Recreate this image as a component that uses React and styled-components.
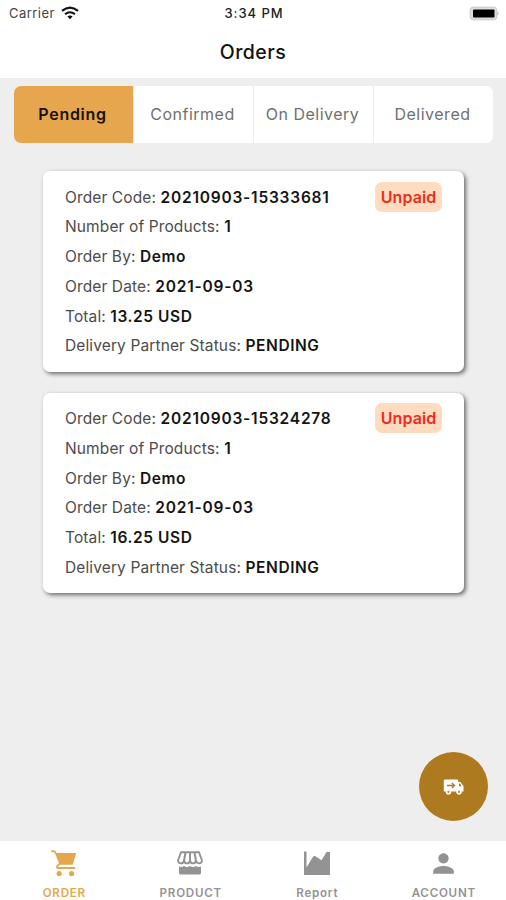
import React from 'react'
import styled, { createGlobalStyle } from 'styled-components'
import { MdPerson } from 'react-icons/md'

const GlobalStyle = createGlobalStyle`
  * {
    box-sizing: border-box;
  }
  body {
    margin: 0;
    background: #eee;
    font-family: Inter, 'Liberation Sans', sans-serif;
  }
`
const Screen = styled.div`
  display: flex;
  flex-direction: column;
  width: 506px;
  height: 900px;
  overflow: hidden;
  position: relative;
  background: #eee;
`
const Header = styled.header`
  height: 78px;
  background: #fff;
`
const StatusBar = styled.div`
  display: grid;
  grid-template-columns: 1fr auto 1fr;
  align-items: center;
  height: 26px;
  padding: 0 7px 0 9px;
  font-size: 13px;
  color: #222;
`
const Carrier = styled.div`
  display: flex;
  align-items: center;
  gap: 6px;
  color: #444;
  letter-spacing: 0.45px;
`
const Clock = styled.div`
  font-weight: 500;
  letter-spacing: 0.95px;
`
const Battery = styled.svg`
  justify-self: end;
`
const Title = styled.h1`
  margin: 0;
  height: 52px;
  line-height: 52px;
  text-align: center;
  font-size: 19.5px;
  font-weight: 500;
  letter-spacing: 0.45px;
  color: #111;
`
const Tabs = styled.div`
  display: flex;
  flex: none;
  height: 57px;
  margin: 8px 13px 0 14px;
  border-radius: 7px;
  overflow: hidden;
  background: #fff;
`
const Tab = styled.div`
  flex: 1;
  display: flex;
  align-items: center;
  justify-content: center;
  padding: 0 2px 2px 0;
  font-size: 16px;
  letter-spacing: ${({ $active }) => ($active ? '0.7px' : '0.5px')};
  font-weight: ${({ $active }) => ($active ? 600 : 400)};
  color: ${({ $active }) => ($active ? '#171006' : '#707070')};
  background: ${({ $active }) => ($active ? '#e5a64d' : '#fff')};
  & + & {
    border-left: 1.5px solid #ebebeb;
  }
`
const List = styled.main`
  flex: 1;
  display: flex;
  flex-direction: column;
  gap: 21px;
  padding: 28px 42px 0 43px;
`
const Card = styled.article`
  display: flex;
  justify-content: space-between;
  align-items: flex-start;
  height: 200.5px;
  padding: 10.5px 22px 0;
  border-radius: 7px;
  background: #fff;
  box-shadow: 2px 2px 4px rgba(0, 0, 0, 0.55);
`
const Lines = styled.div`
  padding-top: 1px;
`
const Line = styled.div`
  height: 29.8px;
  line-height: 30px;
  font-size: 15.5px;
  letter-spacing: 0.12px;
  white-space: nowrap;
  color: #4c4c4c;
`
const Value = styled.b`
  font-weight: 600;
  letter-spacing: ${({ $numeric }) => ($numeric ? '0.78px' : '0.57px')};
  color: #141414;
`
const Badge = styled.div`
  width: 67px;
  height: 30px;
  line-height: 30px;
  border-radius: 7px;
  text-align: center;
  font-size: 16px;
  font-weight: 600;
  letter-spacing: 0.1px;
  background: #ffdcc0;
  color: #ee2c20;
`
const Fab = styled.div`
  position: absolute;
  right: 18.5px;
  bottom: 79px;
  width: 69px;
  height: 69px;
  border-radius: 50%;
  display: flex;
  align-items: center;
  justify-content: center;
  background: #ae7a20;
`
const BottomBar = styled.nav`
  display: flex;
  height: 59px;
  background: #fff;
`
const NavItem = styled.div`
  flex: 1;
  display: flex;
  flex-direction: column;
  align-items: center;
  padding: 7px 0 0 1px;
  color: ${({ $active }) => ($active ? '#e5a64d' : '#939393')};
`
const NavIcon = styled.div`
  display: flex;
  flex: none;
  align-items: center;
  justify-content: center;
  height: 30px;
`
const NavLabel = styled.div`
  margin-top: 7px;
  padding-left: 1px;
  line-height: 17px;
  font-size: 11.6px;
  font-weight: 600;
  letter-spacing: 0.75px;
`

const WifiIcon = () => (
  <svg width="18" height="14" viewBox="0 0 18 14" fill="none" stroke="#111" strokeWidth="2.1">
    <path d="M1 4.900Q9-1.800 17 4.900" />
    <path d="M4 8.300Q9 4.200 14 8.300" />
    <path d="M9 13.200 6.400 10.600Q9 8.600 11.600 10.600Z" fill="#111" stroke="none" />
  </svg>
)

const BatteryIcon = () => (
  <Battery width="30" height="15" viewBox="0 0 30 15">
    <rect x="1.2" y="1.2" width="26.6" height="12.6" rx="3" fill="#dedede" stroke="#c8c8c8" />
    <rect x="4" y="3.5" width="21.500" height="8" rx="0.8" fill="#000" />
    <path d="M28.500 5.500Q30.500 7.500 28.500 9.500Z" fill="#aaa" />
  </Battery>
)

const CartIcon = () => (
  <svg width="26" height="28" viewBox="0 0 26 28" fill="none" stroke="currentColor">
    <path d="M.9 2.200Q4 1.800 4.800 4L9 14.500 6 17.300Q5.500 19 7.500 19H23.500" strokeWidth="1.8" strokeLinecap="round" strokeLinejoin="round" />
    <path d="M4.800 4H25.200L21.700 15.800H9.200Z" fill="currentColor" stroke="none" />
    <circle cx="8.200" cy="24.600" r="2.600" fill="currentColor" stroke="none" />
    <circle cx="20.600" cy="24.600" r="2.600" fill="currentColor" stroke="none" />
  </svg>
)

const StoreIcon = () => (
  <svg width="26" height="24" viewBox="0 0 26 24" fill="none" stroke="currentColor">
    <path
      d="M4 1.200H22L25 9.500Q24.700 12.400 22.300 12.400T19 9.800Q18.500 12.400 16 12.400T13 9.800Q12.500 12.400 10 12.400T7 9.800Q6.500 12.400 3.900 12.400T1 9.500Z"
      strokeWidth="1.9"
      strokeLinejoin="round"
    />
    <path d="M8.500 1.500 7 10M13 1.500V10M17.500 1.500 19 10" strokeWidth="2" />
    <path d="M2 15.600Q5 16.400 7 15 10 16.900 13 15 16 16.900 19 15 21 16.400 24 15.600V22Q24 23.400 22.600 23.400H3.400Q2 23.400 2 22Z" fill="currentColor" stroke="none" />
  </svg>
)

const ReportIcon = () => (
  <svg width="26" height="24" viewBox="0 0 26 24" fill="currentColor">
    <path d="M0 .5H2.500V16.500L9 5.700Q9.800 4.500 11 5.100L17.500 9.200 22.500 1H26V24H0Z" />
  </svg>
)

const TruckIcon = () => (
  <svg width="21" height="16" viewBox="0 0 21 16">
    <path d="M2 .5H14Q15.200 .5 15.200 1.700V3H17.300L20.500 7V12.500H.8V1.700Q.8 .5 2 .5Z" fill="#fff" />
    <path d="M16 4.600H17L18.800 7.200H16Z" fill="#ae7a20" />
    <path d="M4 6.500H10.500M8.800 4 11.500 6.500 8.800 9" fill="none" stroke="#ae7a20" strokeWidth="1.300" />
    <g fill="#c99345" stroke="#fff" strokeWidth="1.600">
      <circle cx="5.500" cy="12.700" r="2" />
      <circle cx="16" cy="12.700" r="2" />
    </g>
  </svg>
)

const tabs = ['Pending', 'Confirmed', 'On Delivery', 'Delivered']

const orders = [
  { code: '20210903-15333681', products: 1, by: 'Demo', date: '2021-09-03', total: '13.25 USD', status: 'PENDING' },
  { code: '20210903-15324278', products: 1, by: 'Demo', date: '2021-09-03', total: '16.25 USD', status: 'PENDING' },
]

const OrderCard = ({ order }) => (
  <Card>
    <Lines>
      <Line>Order Code: <Value $numeric>{order.code}</Value></Line>
      <Line>Number of Products: <Value>{order.products}</Value></Line>
      <Line>Order By: <Value>{order.by}</Value></Line>
      <Line>Order Date: <Value $numeric>{order.date}</Value></Line>
      <Line>Total: <Value>{order.total}</Value></Line>
      <Line>Delivery Partner Status: <Value>{order.status}</Value></Line>
    </Lines>
    <Badge>Unpaid</Badge>
  </Card>
)

const App = () => (
  <>
    <GlobalStyle />
    <Screen>
      <Header>
        <StatusBar>
          <Carrier>Carrier <WifiIcon /></Carrier>
          <Clock>3:34 PM</Clock>
          <BatteryIcon />
        </StatusBar>
        <Title>Orders</Title>
      </Header>
      <Tabs>
        {tabs.map((tab, i) => (
          <Tab key={tab} $active={i === 0}>{tab}</Tab>
        ))}
      </Tabs>
      <List>
        {orders.map(order => (
          <OrderCard key={order.code} order={order} />
        ))}
      </List>
      <Fab>
        <TruckIcon />
      </Fab>
      <BottomBar>
        <NavItem $active>
          <NavIcon><CartIcon /></NavIcon>
          <NavLabel>ORDER</NavLabel>
        </NavItem>
        <NavItem>
          <NavIcon><StoreIcon /></NavIcon>
          <NavLabel>PRODUCT</NavLabel>
        </NavItem>
        <NavItem>
          <NavIcon><ReportIcon /></NavIcon>
          <NavLabel>Report</NavLabel>
        </NavItem>
        <NavItem>
          <NavIcon><MdPerson size={31} /></NavIcon>
          <NavLabel>ACCOUNT</NavLabel>
        </NavItem>
      </BottomBar>
    </Screen>
  </>
)

export default App
